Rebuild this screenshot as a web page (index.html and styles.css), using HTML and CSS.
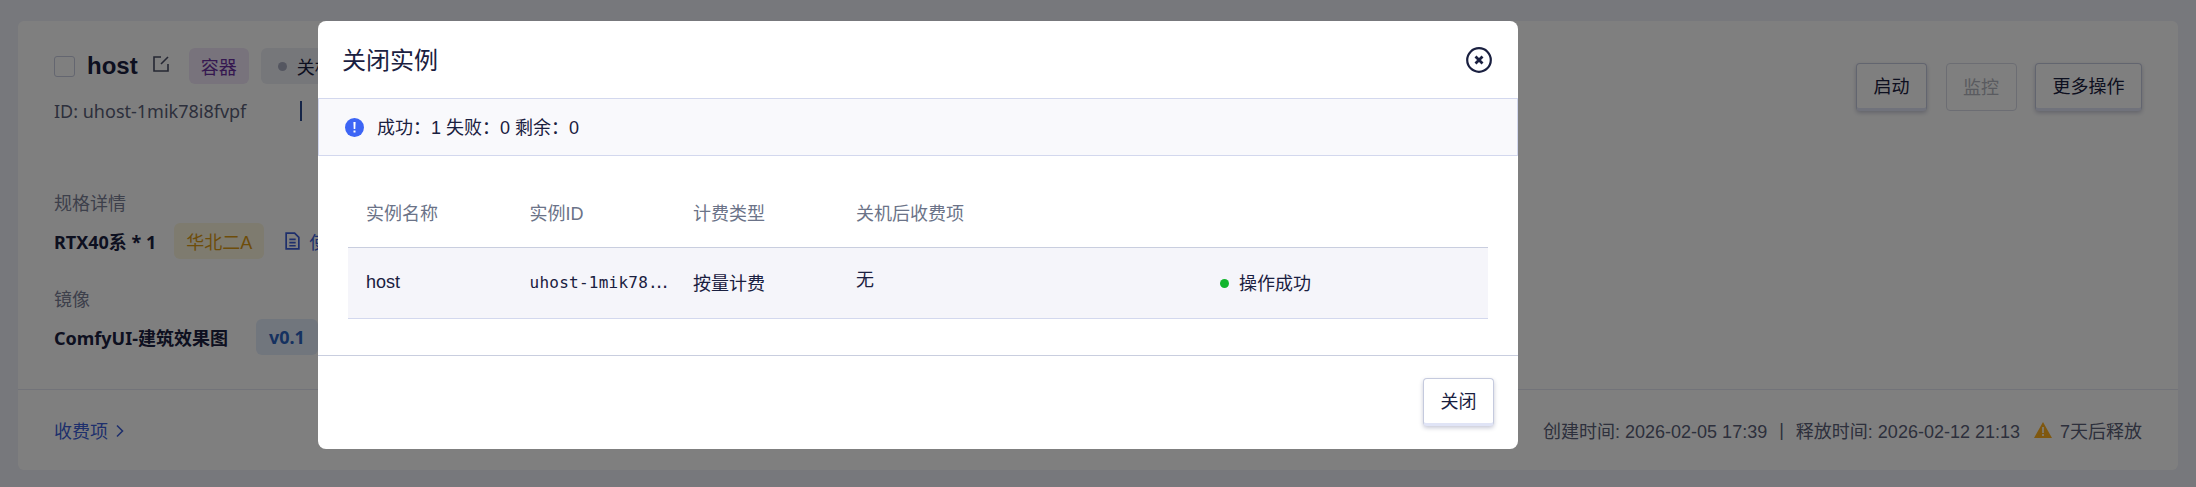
FILE: index.html
```html
<!DOCTYPE html>
<html lang="zh-cmn-Hans">

<head>
    <meta charset="UTF-8">
    <title>关闭实例</title>
    <link rel="stylesheet" href="styles.css">
</head>

<body>
    <div class="page">
        <div class="card">
            <div class="card-head">
                <div class="head-left">
                    <div class="title-row">
                        <span class="checkbox"></span>
                        <span class="host-name">host</span>
                        <svg class="edit-icon" viewBox="0 0 16 16" fill="none" stroke="currentColor" stroke-width="1.600">
                            <path d="M8 1H1v14h14V8"/>
                            <path d="M8 8l7-7"/>
                        </svg>
                        <span class="tag tag-purple">容器</span>
                        <span class="tag tag-gray"><i class="gray-dot"></i>关机</span>
                    </div>
                    <div class="id-row">
                        <span class="id-text">ID: uhost-1mik78i8fvpf</span>
                        <span class="id-sep"></span>
                    </div>
                </div>
                <div class="head-actions">
                    <button class="btn">启动</button>
                    <button class="btn btn-disabled">监控</button>
                    <button class="btn">更多操作</button>
                </div>
            </div>
            <div class="card-body">
                <div class="field-label">规格详情</div>
                <div class="field-value">
                    <b>RTX40系 * 1</b>
                    <span class="tag tag-yellow">华北二A</span>
                    <svg class="doc-icon" viewBox="0 0 14 17" fill="none" stroke="currentColor" stroke-width="1.600">
                        <path d="M1 1h8l4 4v11H1z"/>
                        <path d="M4 7h6M4 10h6M4 13h6"/>
                    </svg>
                    <span class="link">使用说明</span>
                </div>
                <div class="field-label field-label-second">镜像</div>
                <div class="field-value">
                    <b>ComfyUI-建筑效果图</b>
                    <span class="tag tag-blue">v0.1</span>
                </div>
            </div>
            <div class="card-foot">
                <span class="link fee-link">收费项
                    <svg class="chevron" viewBox="0 0 8 14" fill="none" stroke="currentColor" stroke-width="1.600"><path d="M1 1.500L6.500 7 1 12.500"/></svg>
                </span>
                <div class="foot-times">
                    <span>创建时间: 2026-02-05 17:39</span>
                    <span class="time-sep">|</span>
                    <span>释放时间: 2026-02-12 21:13</span>
                    <svg class="warn-icon" viewBox="0 0 18 16"><path d="M9 0l9 16H0z" fill="#ffb020"/><path d="M8.200 5h1.600v6H8.200zM8.200 12h1.600v2H8.200z" fill="#fff"/></svg>
                    <span>7天后释放</span>
                </div>
            </div>
        </div>
    </div>

    <div class="overlay"></div>

    <div class="modal">
        <div class="modal-head">
            <span class="modal-title">关闭实例</span>
            <svg class="close-icon" viewBox="0 0 26 26" fill="none" stroke="#1a2040">
                <circle cx="13" cy="13" r="11.800" stroke-width="2.200"/>
                <path d="M9.500 9.500l7 7M16.500 9.500l-7 7" stroke-width="2.800"/>
            </svg>
        </div>
        <div class="alert">
            <svg class="alert-icon" viewBox="0 0 19 19">
                <circle cx="9.500" cy="9.500" r="9.500" fill="#3d65f5"/>
                <path d="M8.400 4h2.200l-.3 7H8.700zM8.500 12.500h2v2h-2z" fill="#fff"/>
            </svg>
            <span class="alert-text">成功：1 失败：0 剩余：0</span>
        </div>
        <div class="modal-body">
            <table class="result-table">
                <colgroup>
                    <col class="col-name">
                    <col class="col-id">
                    <col class="col-type">
                    <col class="col-fee">
                    <col>
                </colgroup>
                <thead>
                    <tr>
                        <th>实例名称</th>
                        <th>实例ID</th>
                        <th>计费类型</th>
                        <th>关机后收费项</th>
                        <th></th>
                    </tr>
                </thead>
                <tbody>
                    <tr>
                        <td>host</td>
                        <td class="mono">uhost-1mik78<span class="dots">...</span></td>
                        <td>按量计费</td>
                        <td class="cell-raised">无</td>
                        <td><i class="green-dot"></i>操作成功</td>
                    </tr>
                </tbody>
            </table>
        </div>
        <div class="modal-foot">
            <button class="btn btn-close">关闭</button>
        </div>
    </div>
</body>

</html>
```

FILE: styles.css
```css
html {
    height: 100%;
}

body {
    margin: 0;
    width: 2196px;
    height: 487px;
    overflow: hidden;
    background-color: #eef0f8;
    color: #1a2040;
    font-family: "Liberation Sans", "Noto Sans CJK SC", sans-serif;
    font-size: 18px;
}

.page {
    padding: 21px 18px 17px;
}

.card {
    height: 449px;
    background-color: #fff;
    border-radius: 6px;
    display: flex;
    flex-direction: column;
}

.card-head {
    height: 131px;
    box-sizing: border-box;
    padding: 27px 36px 0;
    display: flex;
    justify-content: space-between;
}

.title-row {
    display: flex;
    align-items: center;
    height: 36px;
}

.checkbox {
    width: 19px;
    height: 19px;
    border: 1px solid #c8cce0;
    border-radius: 3px;
    margin-right: 12px;
}

.host-name {
    font-size: 24px;
    font-weight: bold;
}

.edit-icon {
    width: 16px;
    height: 16px;
    margin: -4px 20px 0 15px;
    color: #4a4f66;
}

.tag {
    display: inline-flex;
    align-items: center;
    height: 36px;
    padding: 0 12px;
    border-radius: 6px;
    font-size: 18px;
    box-sizing: border-box;
}

.tag-purple {
    background-color: #f0e6f8;
    color: #6b2fa0;
}

.tag-gray {
    background-color: #eceef5;
    margin-left: 12px;
    padding-left: 17px;
}

.gray-dot {
    width: 9px;
    height: 9px;
    border-radius: 50%;
    background-color: #a8acc0;
    margin-right: 10px;
}

.id-row {
    display: flex;
    align-items: center;
    margin-top: 12px;
    height: 30px;
}

.id-text {
    font-family: "Noto Sans", "Noto Sans CJK SC", sans-serif;
    font-size: 18px;
    color: #5a6078;
    width: 246px;
}

.id-sep {
    width: 1.500px;
    height: 20px;
    background-color: #2a4a90;
}

.head-actions {
    display: flex;
    gap: 18.500px;
    padding-top: 15px;
    align-items: flex-start;
}

.btn {
    height: 48px;
    padding: 0 16.500px 3px;
    background-color: #fff;
    border: 1px solid #c5cade;
    border-bottom: 3px solid #e0e4f6;
    border-radius: 4px;
    box-shadow: 0 2px 4px rgba(30, 40, 90, 0.25);
    color: #1a2040;
    font-family: inherit;
    font-size: 18px;
}

.btn-disabled {
    color: #b4b6c0;
    border-color: #d8dae6;
    border-bottom: 1px solid #d8dae6;
    box-shadow: none;
    background-color: #fff;
}

.card-body {
    flex: 1;
    padding: 38px 36px 0;
}

.field-label {
    color: #7a8096;
    line-height: 28px;
}

.field-label-second {
    margin-top: 27px;
}

.field-value {
    display: flex;
    align-items: center;
    height: 36px;
    margin-top: 5px;
    font-family: "Noto Sans", "Noto Sans CJK SC", sans-serif;
}

.field-value b {
    font-size: 18px;
}

.tag-yellow {
    background-color: #fcf7de;
    color: #dc9a14;
    font-family: "Liberation Sans", "Noto Sans CJK SC", sans-serif;
    margin-left: 18px;
}

.tag-blue {
    background-color: #e3ecfb;
    color: #2a63c0;
    font-weight: bold;
    margin-left: 28px;
    padding: 0 13px;
}

.doc-icon {
    width: 15px;
    height: 18px;
    margin: 0 9px 0 21px;
    color: #3d5fd8;
}

.link {
    color: #3d5fd8;
    white-space: nowrap;
}

.card-foot {
    height: 81px;
    box-sizing: border-box;
    border-top: 1px solid #e4e6f2;
    padding: 0 36px;
    display: flex;
    align-items: center;
    justify-content: space-between;
}

.chevron {
    width: 8px;
    height: 14px;
    margin-left: 3px;
}

.foot-times {
    display: flex;
    align-items: center;
    font-size: 18px;
    color: #5a6078;
}

.time-sep {
    margin: 0 12px;
}

.warn-icon {
    width: 18px;
    height: 16px;
    margin: 0 8px 0 14px;
}

.overlay {
    position: absolute;
    top: 0;
    left: 0;
    width: 100%;
    height: 100%;
    background-color: rgba(0, 0, 0, 0.5);
}

.modal {
    position: absolute;
    top: 21px;
    left: 318px;
    width: 1200px;
    height: 428px;
    background-color: #fff;
    border-radius: 8px;
    display: flex;
    flex-direction: column;
}

.modal-head {
    height: 77px;
    padding: 0 26px 0 24px;
    display: flex;
    align-items: center;
    justify-content: space-between;
}

.modal-title {
    font-size: 24px;
    margin: -2px 0 0 0;
}

.close-icon {
    width: 26px;
    height: 26px;
}

.alert {
    height: 58px;
    box-sizing: border-box;
    background-color: #f9f9fc;
    border: 1px solid #d3d8ee;
    padding: 0 26px;
    display: flex;
    align-items: center;
    gap: 13px;
}

.alert-text {
    margin-top: -2px;
}

.alert-icon {
    width: 19px;
    height: 19px;
}

.modal-body {
    flex: 1;
    padding: 21px 30px 0;
}

.result-table {
    width: 1140px;
    table-layout: fixed;
    border-collapse: collapse;
}

.col-name,
.col-id {
    width: 163.500px;
}

.col-type {
    width: 163px;
}

.col-fee {
    width: 364px;
}

.result-table th {
    height: 70px;
    padding: 0 18px;
    text-align: left;
    font-weight: normal;
    color: #6b7388;
    border-bottom: 1px solid #c9cedf;
}

.result-table td {
    height: 71px;
    box-sizing: border-box;
    padding: 0 18px 2px;
    background-color: #f5f5fa;
    border-bottom: 1px solid #d3d8ee;
}

.result-table td.mono {
    font-family: "DejaVu Sans Mono", monospace;
    font-size: 16px;
    letter-spacing: 0.250px;
    padding-right: 0;
    white-space: nowrap;
}

.dots {
    letter-spacing: -3.500px;
}

.result-table td.cell-raised {
    padding-bottom: 10px;
}

.green-dot {
    display: inline-block;
    width: 9px;
    height: 9px;
    border-radius: 50%;
    background-color: #12b52d;
    margin-right: 10px;
    vertical-align: 2px;
}

.modal-foot {
    height: 94px;
    box-sizing: border-box;
    border-top: 1px solid #c9cedf;
    padding: 22px 24px 0 0;
    display: flex;
    justify-content: flex-end;
    align-items: flex-start;
}
```
